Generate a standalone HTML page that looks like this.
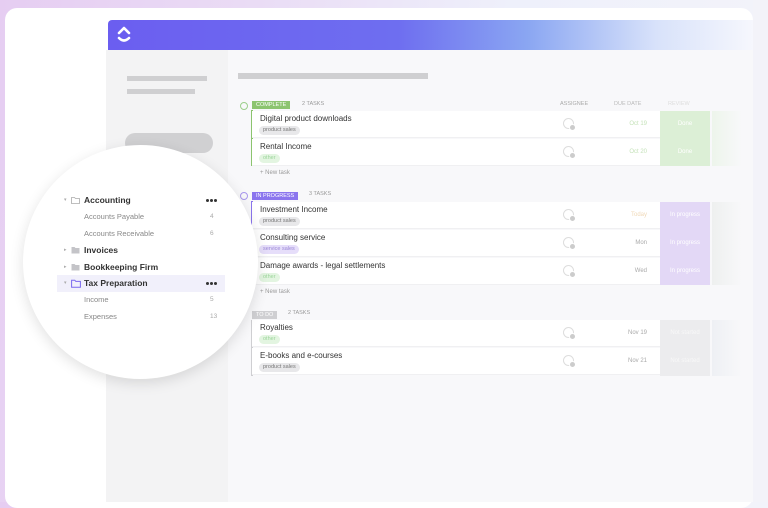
<!DOCTYPE html><html><head><meta charset="utf-8"><style>
*{margin:0;padding:0;box-sizing:border-box}
body{width:768px;height:502px;overflow:hidden;font-family:"Liberation Sans",sans-serif;background:linear-gradient(100deg,#e6cdf2 0%,#eadcf5 30%,#eef0fb 60%,#f4f4fa 100%);position:relative}
.a{position:absolute;white-space:nowrap}
.card{left:5px;top:8px;width:748px;height:500px;background:#fff;border-radius:12px}
.right{left:753px;top:0;width:15px;height:502px;background:#f3f3f9}
.hdr{left:108px;top:20px;width:645px;height:30px;background:linear-gradient(90deg,#6b5ef0 0%,#6e6ef0 45%,#8aa6f2 65%,#d8e2fa 85%,#f6f7fd 100%);border-top-left-radius:4px}
.side{left:106px;top:50px;width:122px;height:452px;background:#f3f3f4}
.main{left:228px;top:50px;width:525px;height:452px;background:#f8f8fa}
.bar{background:#cfcfd1;height:6px}
.row{left:252px;width:408px;height:27px;background:#fff;border-bottom:1px solid #f0f0f2}
.tt{position:absolute;left:8px;top:3px;font-size:8px;color:#333}
.tag{position:absolute;left:7px;top:15px;font-size:5.5px;padding:1px 4px;border-radius:5px;line-height:7px}
.pg{background:#e8e8ea;color:#777}.og{background:#e3f5e1;color:#9bd59a}.sg{background:#e6defa;color:#9a86d6}
.dt{position:absolute;left:355px;top:10px;font-size:6px;color:#aaa;width:40px;text-align:right}
.av{position:absolute;left:311px;top:7px;width:11px;height:11px;border:1px solid #ddd;border-radius:50%}
.av:after{content:"";position:absolute;right:-3px;bottom:-3px;width:5px;height:5px;border-radius:50%;background:#ccc;border:1px solid #fff}
.st{width:50px;height:27px;font-size:6px;color:#fff;text-align:center;line-height:27px}
.gh{font-size:5.5px;color:#fff;padding:0 4px;height:8px;line-height:8px}
.cnt{font-size:5.5px;color:#999}
.nt{font-size:6px;color:#999}
.circle{left:23px;top:145px;width:235px;height:234px;border-radius:50%;background:#fff;box-shadow:0 4px 14px rgba(0,0,0,.12)}
.si{position:absolute;white-space:nowrap;font-size:8.5px;color:#333;font-weight:bold}
.ss{position:absolute;white-space:nowrap;font-size:7.5px;color:#888}
.n{position:absolute;font-size:6.5px;color:#aaa;left:210px}
.dots{position:absolute;left:206px;width:12px;height:3px;}
.dots:before{content:"";position:absolute;left:0;top:0;width:3px;height:3px;border-radius:50%;background:#333;box-shadow:4px 0 0 #333,8px 0 0 #333}
.car{position:absolute;left:64px;font-size:5px;color:#aaa}
</style></head><body>
<div class="a card"></div><div class="a right"></div>
<div class="a hdr"></div>
<svg class="a" style="left:116px;top:25px" width="16" height="20" viewBox="0 0 16 20"><path d="M3 8 L8 3 L13 8" stroke="#fff" stroke-width="2.6" fill="none" stroke-linecap="round" stroke-linejoin="round"/><path d="M3 13 Q8 18 13 13" stroke="#fff" stroke-width="2.6" fill="none" stroke-linecap="round"/></svg>
<div class="a side"></div><div class="a main"></div>
<div class="a bar" style="left:127px;top:76px;width:80px;height:5px"></div>
<div class="a bar" style="left:127px;top:89px;width:68px;height:5px"></div>
<div class="a" style="left:125px;top:133px;width:88px;height:20px;background:#d0d0d2;border-radius:10px"></div>
<div class="a bar" style="left:238px;top:73px;width:190px;height:6px"></div>

<div class="a" style="left:240px;top:102px;width:8px;height:8px;border:1px solid #9ccf8c;border-radius:50%"></div>
<div class="a gh" style="left:252px;top:101px;background:#8cc46f">COMPLETE</div>
<div class="a cnt" style="left:302px;top:101px">2 TASKS</div>
<div class="a cnt" style="left:560px;top:101px;color:#aaa">ASSIGNEE</div>
<div class="a cnt" style="left:614px;top:101px;color:#bbb">DUE DATE</div>
<div class="a cnt" style="left:668px;top:101px;color:#ddd">REVIEW</div>
<div class="a" style="left:251px;top:110px;width:2px;height:56px;background:#8cc46f"></div>
<div class="a row" style="top:111px"><div class="tt">Digital product downloads</div><div class="tag pg">product sales</div><div class="av"></div><div class="dt" style="color:#c5e2b9">Oct 19</div></div>
<div class="a row" style="top:139px"><div class="tt">Rental Income</div><div class="tag og">other</div><div class="av"></div><div class="dt" style="color:#c5e2b9">Oct 20</div></div>
<div class="a st" style="left:660px;top:111px;background:#dcefd6;height:55px"></div>
<div class="a st" style="left:660px;top:111px">Done</div><div class="a st" style="left:660px;top:139px">Done</div>
<div class="a" style="left:712px;top:111px;width:30px;height:55px;background:linear-gradient(90deg,#edf5eb,#f8f8fa)"></div>
<div class="a nt" style="left:260px;top:170px">+ New task</div>

<div class="a" style="left:240px;top:192px;width:8px;height:8px;border:1px solid #a998ee;border-radius:50%"></div>
<div class="a gh" style="left:252px;top:192px;background:#8b75ee">IN PROGRESS</div>
<div class="a cnt" style="left:309px;top:191px">3 TASKS</div>
<div class="a" style="left:251px;top:201px;width:2px;height:84px;background:#8b75ee"></div>
<div class="a row" style="top:202px"><div class="tt">Investment Income</div><div class="tag pg">product sales</div><div class="av"></div><div class="dt" style="color:#f0d9b8">Today</div></div>
<div class="a row" style="top:230px"><div class="tt">Consulting service</div><div class="tag sg">service sales</div><div class="av"></div><div class="dt">Mon</div></div>
<div class="a row" style="top:258px"><div class="tt">Damage awards - legal settlements</div><div class="tag og">other</div><div class="av"></div><div class="dt">Wed</div></div>
<div class="a" style="left:660px;top:202px;width:50px;height:83px;background:#e3d8f6"></div>
<div class="a st" style="left:660px;top:202px">In progress</div><div class="a st" style="left:660px;top:230px">In progress</div><div class="a st" style="left:660px;top:258px">In progress</div>
<div class="a" style="left:712px;top:202px;width:30px;height:83px;background:linear-gradient(90deg,#eef0ef,#f8f8fa)"></div>
<div class="a nt" style="left:260px;top:289px">+ New task</div>

<div class="a gh" style="left:252px;top:311px;background:#cfcfd2">TO DO</div>
<div class="a cnt" style="left:288px;top:310px">2 TASKS</div>
<div class="a" style="left:251px;top:320px;width:2px;height:56px;background:#cfcfd2"></div>
<div class="a row" style="top:320px"><div class="tt">Royalties</div><div class="tag og">other</div><div class="av"></div><div class="dt">Nov 19</div></div>
<div class="a row" style="top:348px"><div class="tt">E-books and e-courses</div><div class="tag pg">product sales</div><div class="av"></div><div class="dt">Nov 21</div></div>
<div class="a" style="left:660px;top:320px;width:50px;height:56px;background:#ececee"></div>
<div class="a st" style="left:660px;top:320px;color:#f8f8f8">Not started</div><div class="a st" style="left:660px;top:348px;color:#f8f8f8">Not started</div>
<div class="a" style="left:712px;top:320px;width:30px;height:56px;background:linear-gradient(90deg,#eef0f4,#f8f8fa)"></div>

<div class="a circle"></div>
<div class="a" style="left:0;top:0;width:768px;height:502px">
<div class="car" style="top:197px">▾</div>
<svg class="a" style="left:71px;top:196px" width="9" height="8"><path d="M0.5 1.5h3l1 1h4v5h-8z" fill="none" stroke="#aaa" stroke-width="0.8"/></svg>
<div class="si" style="left:84px;top:195px">Accounting</div><div class="dots" style="top:199px"></div>
<div class="ss" style="left:84px;top:212px">Accounts Payable</div><div class="n" style="top:213px">4</div>
<div class="ss" style="left:84px;top:229px">Accounts Receivable</div><div class="n" style="top:230px">6</div>
<div class="car" style="top:247px">▸</div>
<svg class="a" style="left:71px;top:246px" width="9" height="8"><path d="M0.5 1h3l1 1h4v5.5h-8z" fill="#c4c4c8"/></svg>
<div class="si" style="left:84px;top:245px">Invoices</div>
<div class="car" style="top:264px">▸</div>
<svg class="a" style="left:71px;top:263px" width="9" height="8"><path d="M0.5 1h3l1 1h4v5.5h-8z" fill="#c4c4c8"/></svg>
<div class="si" style="left:84px;top:262px">Bookkeeping Firm</div>
<div class="a" style="left:57px;top:275px;width:168px;height:17px;background:#f1f0fb"></div>
<div class="car" style="top:280px">▾</div>
<svg class="a" style="left:71px;top:279px" width="10" height="9"><path d="M0.6 1.2h3.2l1 1.2h4.6v5.8h-8.8z" fill="none" stroke="#7b68ee" stroke-width="1"/></svg>
<div class="si" style="left:84px;top:278px">Tax Preparation</div><div class="dots" style="top:282px"></div>
<div class="ss" style="left:84px;top:295px">Income</div><div class="n" style="top:296px">5</div>
<div class="ss" style="left:84px;top:312px">Expenses</div><div class="n" style="top:313px">13</div>
</div>
</body></html>
